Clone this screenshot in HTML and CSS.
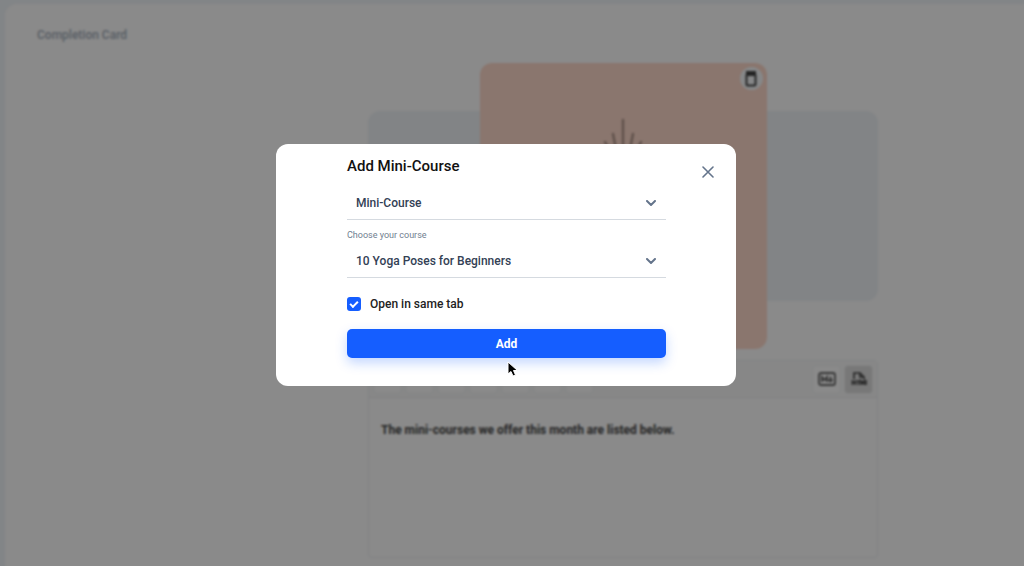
FILE: index.html
```html
<!DOCTYPE html>
<html lang="en">
<head>
    <meta charset="UTF-8">
    <meta name="viewport" content="width=device-width, initial-scale=1.0">
    <title>Add Mini-Course</title>
    <link rel="stylesheet" href="styles.css">
</head>
<body>
    <main class="panel">
        <h1>Completion Card</h1>
        <div class="content">
            <div class="preview">
                <div class="picture">
                    <button type="button" class="delete" aria-label="Delete image">
                        <svg width="12" height="16" viewBox="0 0 12 16">
                            <path d="M1 0h10v5H1z" fill="#444"/>
                            <rect x="1.5" y="3" width="9" height="11.5" rx="1.5" fill="none" stroke="#444" stroke-width="2"/>
                        </svg>
                    </button>
                    <svg class="burst" width="80" height="104" viewBox="0 0 80 104" stroke="#b0958a" stroke-width="2.4" stroke-linecap="round">
                        <path d="M40 2v34M30 16l4 20M50 16l-4 20M22 24l8 14M58 24l-8 14M12 36l12 10M68 36l-12 10"/>
                    </svg>
                </div>
            </div>
            <div class="editor">
                <div class="toolbar">
                    <button type="button" class="tool" aria-label="Bold"></button>
                    <button type="button" class="tool" aria-label="Italic"></button>
                    <button type="button" class="tool" aria-label="Underline"></button>
                    <button type="button" class="tool" aria-label="Link"></button>
                    <button type="button" class="tool" aria-label="List"></button>
                    <button type="button" class="tool" aria-label="Quote"></button>
                    <button type="button" class="tool" aria-label="Code"></button>
                    <button type="button" class="mode" aria-label="Markdown">
                        <svg width="18" height="14" viewBox="0 0 18 14" fill="none" stroke="#666" stroke-width="1.8">
                            <rect x="1" y="1" width="16" height="12" rx="2"/>
                            <path d="M4 10V5l2.500 3L9 5v5M12.500 4.500v5M10.500 7.500l2 2 2-2"/>
                        </svg>
                    </button>
                    <button type="button" class="mode active" aria-label="HTML">
                        <svg width="16" height="16" viewBox="0 0 16 16" fill="none" stroke="#444" stroke-width="1.600">
                            <path d="M3 8V2h6l4 4v2M9 2v4h4"/>
                            <path d="M1.500 9v5M4.500 9v5M1.500 11.500h3M6 10h3M7.500 10v4M10 14v-4l1.500 2 1.500-2v4M15 9v5"/>
                        </svg>
                    </button>
                </div>
                <textarea aria-label="Description">The mini-courses we offer this month are listed below.</textarea>
            </div>
        </div>
    </main>

    <div class="overlay">
        <form class="modal" role="dialog" aria-labelledby="modal-title">
            <button type="button" class="close" aria-label="Close">
                <svg width="12" height="12" viewBox="0 0 12 12" fill="none" stroke="#64748b" stroke-width="1.600" stroke-linecap="round">
                    <path d="M1 1l10 10M11 1L1 11"/>
                </svg>
            </button>
            <h2 id="modal-title">Add Mini-Course</h2>
            <div class="select">
                <select aria-label="Type">
                    <option>Mini-Course</option>
                </select>
                <svg width="10" height="6" viewBox="0 0 10 6"><path d="M1 1l4 4 4-4"/></svg>
            </div>
            <label class="caption" for="course">Choose your course</label>
            <div class="select">
                <select id="course">
                    <option>10 Yoga Poses for Beginners</option>
                </select>
                <svg width="10" height="6" viewBox="0 0 10 6"><path d="M1 1l4 4 4-4"/></svg>
            </div>
            <label class="check">
                <input type="checkbox" checked>
                Open in same tab
            </label>
            <button type="submit" class="add">Add</button>
            <svg class="cursor" width="12" height="17" viewBox="0 0 12 17">
                <path d="M1 1v12l3-2.500 2 4.500 2.500-1-2-4.500H10.500z" fill="#000" stroke="#fff"/>
            </svg>
        </form>
    </div>
</body>
</html>
```

FILE: styles.css
```css
* {
    box-sizing: border-box;
}

body {
    margin: 0;
    background-color: #f1f5f9;
    font-family: Roboto, "Noto Sans", sans-serif;
    overflow: hidden;
}

button {
    padding: 0;
    border: none;
    background: none;
    cursor: pointer;
}

.panel {
    margin: 4px 0 0 5px;
    padding: 23px 32px;
    min-height: 100vh;
    background-color: #fff;
    border-radius: 12px 0 0 0;
}

.panel h1 {
    margin: 0;
    color: #a3adba;
    font-size: 12px;
    line-height: 16px;
    font-weight: 500;
}

.content {
    display: grid;
    grid-template-columns: minmax(0, 510px);
    padding-left: 331px;
    padding-top: 68px;
    gap: 59px;
}

.preview {
    display: flex;
    align-items: center;
    justify-content: center;
    height: 190px;
    background-color: #f0f4f8;
    border-radius: 12px;
}

.picture {
    position: relative;
    flex: none;
    width: 287px;
    height: 286px;
    background-color: #ffdacb;
    border-radius: 12px;
    text-align: center;
    padding-top: 55px;
}

.delete {
    position: absolute;
    top: 4px;
    right: 4px;
    display: grid;
    place-items: center;
    width: 23px;
    height: 23px;
    border-radius: 50%;
    background-color: #f8fafc;
}

.editor {
    border: 1px solid #eef1f5;
    border-radius: 4px;
}

.toolbar {
    display: flex;
    align-items: center;
    gap: 3px;
    height: 37px;
    padding: 0 4px;
    background-color: #fafafa;
    border-bottom: 1px solid #ebedf0;
}

.tool,
.mode {
    display: grid;
    place-items: center;
    width: 29px;
    height: 29px;
    border: 1px solid #f1f3f5;
    border-radius: 4px;
    background-color: #fff;
}

.tool:nth-child(7) {
    margin-right: auto;
}

.mode.active {
    background-color: #dedede;
}

.editor textarea {
    display: block;
    width: 100%;
    height: 159px;
    padding: 24px 12px;
    border: none;
    outline: none;
    resize: none;
    background: none;
    color: #444;
    font: bold 12px/16px Roboto, "Noto Sans", sans-serif;
}

.overlay {
    position: fixed;
    inset: 0;
    display: flex;
    align-items: center;
    justify-content: center;
    padding: 0 12px 36px 0;
    background-color: rgba(0, 0, 0, 0.46);
    backdrop-filter: blur(1px);
}

.modal {
    position: relative;
    display: flex;
    flex-direction: column;
    width: 460px;
    padding: 12px 70px 28px 71px;
    background-color: #fff;
    border-radius: 12px;
}

.modal h2 {
    margin: 0 0 7px;
    color: #111;
    font-size: 15px;
    line-height: 20px;
    font-weight: 500;
}

.close {
    position: absolute;
    top: 18px;
    right: 18px;
    display: grid;
    place-items: center;
    width: 20px;
    height: 20px;
}

.select {
    display: grid;
    align-items: center;
    border-bottom: 1px solid #d5dae0;
}

.select select,
.select svg {
    grid-area: 1 / 1;
}

.select select {
    appearance: none;
    height: 36px;
    padding: 4px 28px 0 9px;
    border: none;
    outline: none;
    background: none;
    color: #334155;
    font: 500 12px/16px Roboto, "Noto Sans", sans-serif;
}

.select svg {
    justify-self: end;
    margin: 3px 10px 0 0;
    pointer-events: none;
    fill: none;
    stroke: #64748b;
    stroke-width: 2;
    stroke-linecap: round;
}

.caption {
    margin: 9px 0 0;
    color: #708090;
    font-size: 9px;
    line-height: 12px;
}

.check {
    display: flex;
    align-items: center;
    gap: 9px;
    margin: 18px 0 17px;
    color: #222;
    font-size: 12px;
    line-height: 16px;
    font-weight: 500;
}

.check input {
    appearance: none;
    display: grid;
    place-items: center;
    width: 14px;
    height: 14px;
    margin: 0;
    border-radius: 3px;
    background-color: #155eff;
}

.check input:checked::before {
    content: "";
    width: 6px;
    height: 3px;
    border: solid #fff;
    border-width: 0 0 2px 2px;
    transform: translateY(-1px) rotate(-45deg);
}

.add {
    height: 29px;
    border-radius: 5px;
    background-color: #155eff;
    box-shadow: 0 5px 12px rgba(21, 94, 255, 0.25);
    color: #fff;
    font: bold 12px/16px Roboto, "Noto Sans", sans-serif;
}

.cursor {
    position: absolute;
    left: 231px;
    bottom: 8px;
}
```
